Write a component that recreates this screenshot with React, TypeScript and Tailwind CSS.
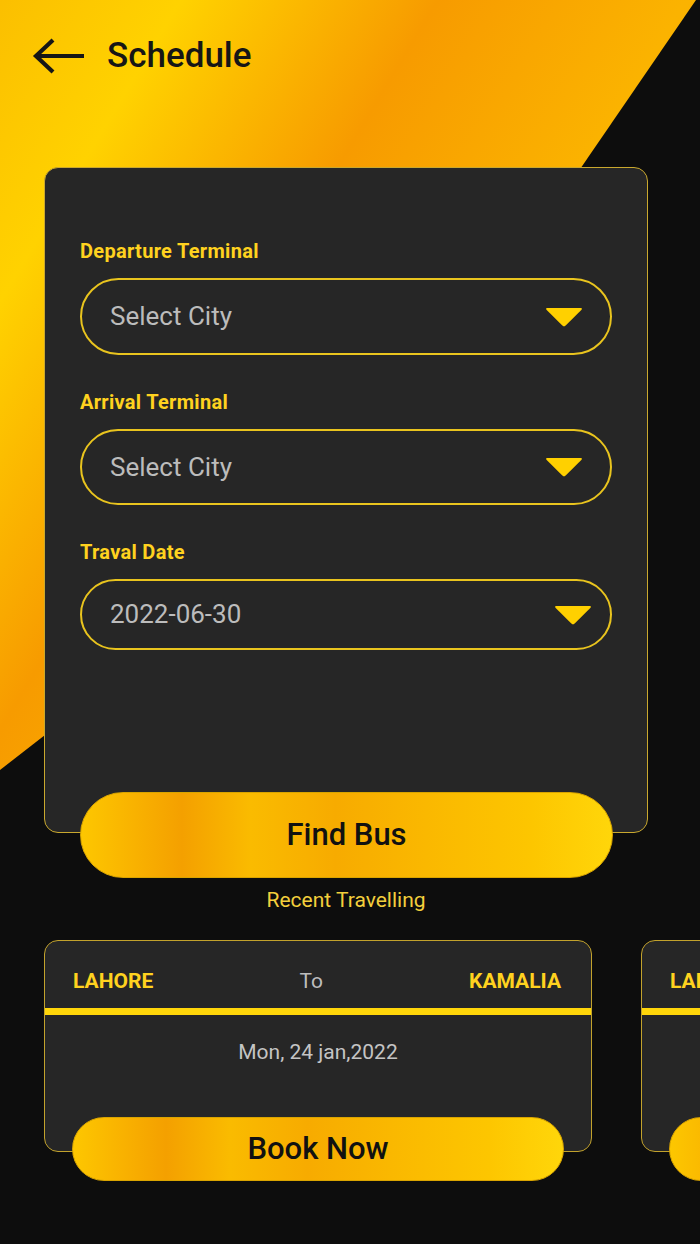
import { ReactNode } from "react";

const font = { fontFamily: "Roboto, 'Noto Sans', sans-serif" };

function Caret() {
  return (
    <svg width="38" height="20" viewBox="0 0 38 20">
      <path
        d="M2.5 1 L35.5 1 Q38 1 36.3 2.9 L20.7 18.6 Q19 20.2 17.3 18.6 L1.7 2.9 Q0 1 2.5 1 Z"
        fill="#ffd000"
      />
    </svg>
  );
}

function Field({
  label,
  value,
  height,
  padRight,
  gapTop,
}: {
  label: string;
  value: string;
  height: string;
  padRight: string;
  gapTop: string;
}) {
  return (
    <div className={gapTop}>
      <p className="text-[20px] leading-[24px] font-bold tracking-[0.3px] text-[#ffd21f]">{label}</p>
      <div
        className={`mt-[15px] flex items-center justify-between rounded-full border-2 border-[#e9c41e] pl-[28px] ${height} ${padRight}`}
      >
        <span className="text-[26px] text-[#bcbcbc]">{value}</span>
        <Caret />
      </div>
    </div>
  );
}

function GoldButton({ children, className = "" }: { children: ReactNode; className?: string }) {
  return (
    <button
      className={`relative z-10 flex items-center justify-center rounded-full border border-[#d9a400] bg-[linear-gradient(90deg,#fdc700_0%,#f9b200_10%,#f4a000_19%,#fabb00_32%,#f7ab00_48%,#fab800_65%,#fdc600_85%,#ffd60a_100%)] font-medium text-[#111] ${className}`}
    >
      {children}
    </button>
  );
}

function TripCard() {
  return (
    <div className="flex w-[548px] shrink-0 flex-col">
      <div className="h-[212px] rounded-[14px] border border-[#c2a22c] bg-[#262626]">
        <div className="flex h-[67px] items-center justify-between pl-[28px] pr-[30px] pt-[14px]">
          <span className="text-[21px] font-bold text-[#ffd21f]">LAHORE</span>
          <span className="text-[21px] text-[#bdbdbd]">To</span>
          <span className="text-[21px] font-bold text-[#ffd21f]">KAMALIA</span>
        </div>
        <div className="h-[7px] bg-[#ffd60a]" />
        <p className="mt-[25px] text-center text-[21px] leading-[24px] text-[#c4c4c4]">
          Mon, 24 jan,2022
        </p>
      </div>
      <GoldButton className="mx-[28px] -mt-[35px] h-[64px] text-[31px]">Book Now</GoldButton>
    </div>
  );
}

export default function App() {
  return (
    <div className="relative h-[1244px] w-[700px] overflow-hidden bg-[#0d0d0d]" style={font}>
      {/* yellow backdrop shape */}
      <svg className="absolute left-0 top-0" width="700" height="800" viewBox="0 0 700 800">
        <defs>
          <linearGradient id="bgGrad" gradientUnits="userSpaceOnUse" x1="0" y1="0" x2="700" y2="420">
            <stop offset="0" stopColor="#fbbf00" />
            <stop offset="0.19" stopColor="#ffd200" />
            <stop offset="0.46" stopColor="#f79b00" />
            <stop offset="0.72" stopColor="#fbb300" />
            <stop offset="1" stopColor="#f8a600" />
          </linearGradient>
        </defs>
        <polygon points="0,0 696,0 360,490 0,770" fill="url(#bgGrad)" />
      </svg>

      <div className="relative">
        {/* Header */}
        <div className="flex h-[112px] items-center gap-[22px] px-[32px]">
          <svg width="53" height="38" viewBox="0 0 53 38" fill="none" stroke="#161616" strokeWidth="4.2">
            <path d="M4 19 H52" />
            <path d="M21 3 L4 19 L21 35" />
          </svg>
          <h1 className="text-[35px] font-medium text-[#161616]">Schedule</h1>
        </div>

        {/* Search card */}
        <div className="ml-[44px] mt-[55px] h-[666px] w-[604px] rounded-[14px] border border-[#c9a82e] bg-[#262626] px-[35px] pt-[71px]">
          <Field label="Departure Terminal" value="Select City" height="h-[77px]" padRight="pr-[27px]" gapTop="" />
          <Field label="Arrival Terminal" value="Select City" height="h-[76px]" padRight="pr-[27px]" gapTop="mt-[35px]" />
          <Field label="Traval Date" value="2022-06-30" height="h-[71px]" padRight="pr-[18px]" gapTop="mt-[35px]" />
        </div>
        <GoldButton className="ml-[80px] -mt-[41px] h-[86px] w-[533px] text-[31px]">Find Bus</GoldButton>

        <p className="mt-[10px] pr-[8px] text-center text-[21px] leading-[24px] text-[#f3cf3c]">Recent Travelling</p>

        {/* Recent trips */}
        <div className="mt-[28px] flex gap-[49px] pl-[44px]">
          <TripCard />
          <TripCard />
        </div>
      </div>
    </div>
  );
}
